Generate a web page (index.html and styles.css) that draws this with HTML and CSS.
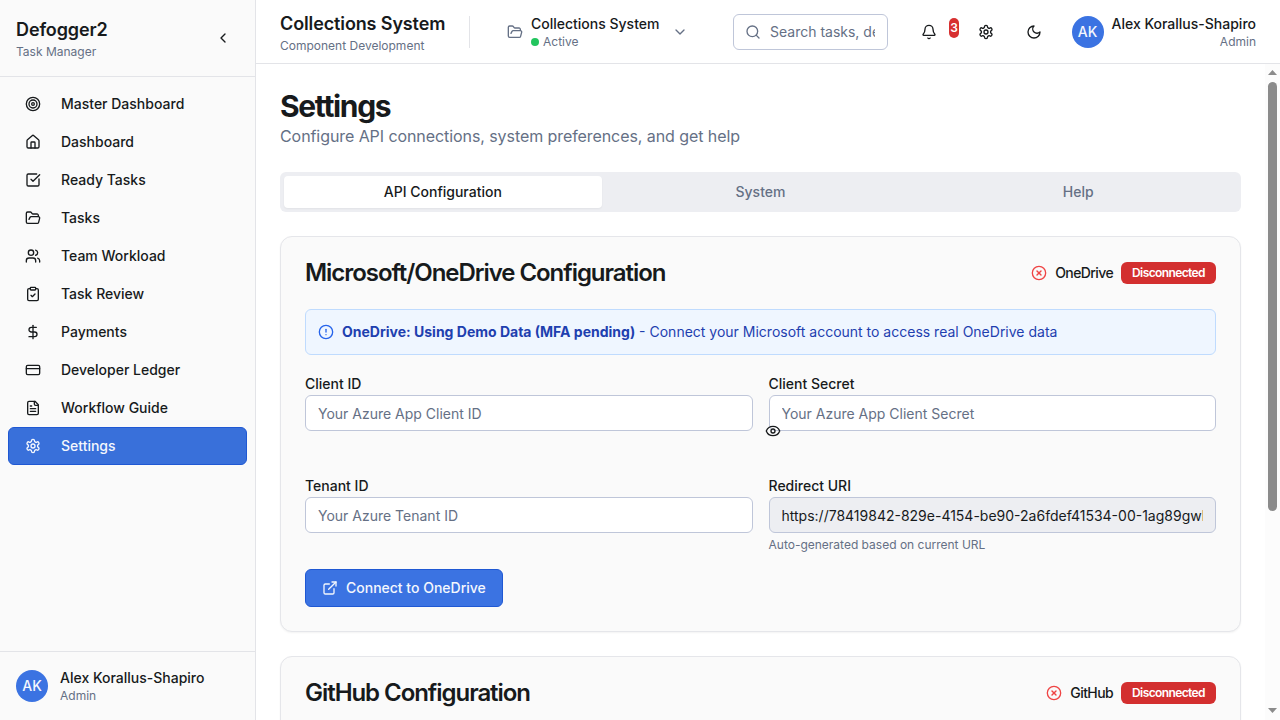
FILE: index.html
```html
<!DOCTYPE html>
<html lang="en">
<head>
<meta charset="utf-8">
<title>Defogger2 - Settings</title>
<link rel="stylesheet" href="styles.css">
</head>
<body>
<svg class="sprite" aria-hidden="true">
  <symbol id="target" viewBox="0 0 24 24"><circle cx="12" cy="12" r="10"/><circle cx="12" cy="12" r="6"/><circle cx="12" cy="12" r="2"/></symbol>
  <symbol id="house" viewBox="0 0 24 24"><path d="M15 21v-8a1 1 0 0 0-1-1h-4a1 1 0 0 0-1 1v8"/><path d="M3 10a2 2 0 0 1 .709-1.528l7-5.999a2 2 0 0 1 2.582 0l7 5.999A2 2 0 0 1 21 10v9a2 2 0 0 1-2 2H5a2 2 0 0 1-2-2z"/></symbol>
  <symbol id="check-square" viewBox="0 0 24 24"><path d="M21 10.5V19a2 2 0 0 1-2 2H5a2 2 0 0 1-2-2V5a2 2 0 0 1 2-2h12.5"/><path d="m9 11 3 3L22 4"/></symbol>
  <symbol id="folder" viewBox="0 0 24 24"><path d="m6 14 1.5-2.9A2 2 0 0 1 9.24 10H20a2 2 0 0 1 1.94 2.5l-1.54 6a2 2 0 0 1-1.95 1.5H4a2 2 0 0 1-2-2V5a2 2 0 0 1 2-2h3.9a2 2 0 0 1 1.69.9l.81 1.2a2 2 0 0 0 1.67.9H18a2 2 0 0 1 2 2v2"/></symbol>
  <symbol id="users" viewBox="0 0 24 24"><path d="M16 21v-2a4 4 0 0 0-4-4H6a4 4 0 0 0-4 4v2"/><circle cx="9" cy="7" r="4"/><path d="M22 21v-2a4 4 0 0 0-3-3.87"/><path d="M16 3.13a4 4 0 0 1 0 7.75"/></symbol>
  <symbol id="clipboard" viewBox="0 0 24 24"><rect width="8" height="4" x="8" y="2" rx="1"/><path d="M16 4h2a2 2 0 0 1 2 2v14a2 2 0 0 1-2 2H6a2 2 0 0 1-2-2V6a2 2 0 0 1 2-2h2"/><path d="m9 14 2 2 4-4"/></symbol>
  <symbol id="dollar" viewBox="0 0 24 24"><path d="M12 2v20"/><path d="M17 5H9.5a3.5 3.5 0 0 0 0 7h5a3.5 3.5 0 0 1 0 7H6"/></symbol>
  <symbol id="card" viewBox="0 0 24 24"><rect width="20" height="14" x="2" y="5" rx="2"/><path d="M2 10h20"/></symbol>
  <symbol id="file" viewBox="0 0 24 24"><path d="M15 2H6a2 2 0 0 0-2 2v16a2 2 0 0 0 2 2h12a2 2 0 0 0 2-2V7Z"/><path d="M14 2v4a2 2 0 0 0 2 2h4"/><path d="M10 9H8"/><path d="M16 13H8"/><path d="M16 17H8"/></symbol>
  <symbol id="gear" viewBox="0 0 24 24"><path d="M12.22 2h-.44a2 2 0 0 0-2 2v.18a2 2 0 0 1-1 1.73l-.43.25a2 2 0 0 1-2 0l-.15-.08a2 2 0 0 0-2.73.73l-.22.38a2 2 0 0 0 .73 2.73l.15.1a2 2 0 0 1 1 1.72v.51a2 2 0 0 1-1 1.74l-.15.09a2 2 0 0 0-.73 2.73l.22.38a2 2 0 0 0 2.73.73l.15-.08a2 2 0 0 1 2 0l.43.25a2 2 0 0 1 1 1.73V20a2 2 0 0 0 2 2h.44a2 2 0 0 0 2-2v-.18a2 2 0 0 1 1-1.73l.43-.25a2 2 0 0 1 2 0l.15.08a2 2 0 0 0 2.73-.73l.22-.39a2 2 0 0 0-.73-2.73l-.15-.08a2 2 0 0 1-1-1.74v-.5a2 2 0 0 1 1-1.74l.15-.09a2 2 0 0 0 .73-2.73l-.22-.38a2 2 0 0 0-2.73-.73l-.15.08a2 2 0 0 1-2 0l-.43-.25a2 2 0 0 1-1-1.73V4a2 2 0 0 0-2-2z"/><circle cx="12" cy="12" r="3"/></symbol>
  <symbol id="chev-left" viewBox="0 0 24 24"><path d="m15 18-6-6 6-6"/></symbol>
  <symbol id="chev-down" viewBox="0 0 24 24"><path d="m6 9 6 6 6-6"/></symbol>
  <symbol id="search" viewBox="0 0 24 24"><circle cx="11" cy="11" r="8"/><path d="m21 21-4.3-4.3"/></symbol>
  <symbol id="bell" viewBox="0 0 24 24"><path d="M10.268 21a2 2 0 0 0 3.464 0"/><path d="M3.262 15.326A1 1 0 0 0 4 17h16a1 1 0 0 0 .74-1.673C19.41 13.956 18 12.499 18 8A6 6 0 0 0 6 8c0 4.499-1.411 5.956-2.738 7.326"/></symbol>
  <symbol id="moon" viewBox="0 0 24 24"><path d="M12 3a6 6 0 0 0 9 9 9 9 0 1 1-9-9Z"/></symbol>
  <symbol id="circle-x" viewBox="0 0 24 24"><circle cx="12" cy="12" r="10"/><path d="m15 9-6 6"/><path d="m9 9 6 6"/></symbol>
  <symbol id="alert" viewBox="0 0 24 24"><circle cx="12" cy="12" r="10"/><path d="M12 8v4"/><path d="M12 16h.01"/></symbol>
  <symbol id="eye" viewBox="0 0 24 24"><path d="M2.062 12.348a1 1 0 0 1 0-.696 10.75 10.75 0 0 1 19.876 0 1 1 0 0 1 0 .696 10.75 10.75 0 0 1-19.876 0"/><circle cx="12" cy="12" r="3"/></symbol>
  <symbol id="external" viewBox="0 0 24 24"><path d="M15 3h6v6"/><path d="M10 14 21 3"/><path d="M18 13v6a2 2 0 0 1-2 2H5a2 2 0 0 1-2-2V8a2 2 0 0 1 2-2h6"/></symbol>
</svg>

<div class="app">
  <aside class="sidebar">
    <div class="brand">
      <div>
        <div class="title">Defogger2</div>
        <div class="caption">Task Manager</div>
      </div>
      <button class="icon-button"><svg class="icon"><use href="#chev-left"/></svg></button>
    </div>
    <nav class="nav">
      <a class="nav-item"><svg class="icon"><use href="#target"/></svg>Master Dashboard</a>
      <a class="nav-item"><svg class="icon"><use href="#house"/></svg>Dashboard</a>
      <a class="nav-item"><svg class="icon"><use href="#check-square"/></svg>Ready Tasks</a>
      <a class="nav-item"><svg class="icon"><use href="#folder"/></svg>Tasks</a>
      <a class="nav-item"><svg class="icon"><use href="#users"/></svg>Team Workload</a>
      <a class="nav-item"><svg class="icon"><use href="#clipboard"/></svg>Task Review</a>
      <a class="nav-item"><svg class="icon"><use href="#dollar"/></svg>Payments</a>
      <a class="nav-item"><svg class="icon"><use href="#card"/></svg>Developer Ledger</a>
      <a class="nav-item"><svg class="icon"><use href="#file"/></svg>Workflow Guide</a>
      <a class="nav-item active"><svg class="icon"><use href="#gear"/></svg>Settings</a>
    </nav>
    <div class="account">
      <div class="avatar">AK</div>
      <div>
        <div class="name">Alex Korallus-Shapiro</div>
        <div class="caption">Admin</div>
      </div>
    </div>
  </aside>

  <div class="workspace">
    <header class="topbar">
      <div class="page-id">
        <div class="title">Collections System</div>
        <div class="caption">Component Development</div>
      </div>
      <div class="divider"></div>
      <div class="project">
        <svg class="icon"><use href="#folder"/></svg>
        <div class="project-text">
          <div class="name">Collections System</div>
          <div class="caption status-line"><span class="dot"></span>Active</div>
        </div>
        <svg class="icon"><use href="#chev-down"/></svg>
      </div>
      <div class="search">
        <svg class="icon"><use href="#search"/></svg>
        <input class="search-input" placeholder="Search tasks, developers...">
      </div>
      <div class="actions">
        <button class="icon-button"><svg class="icon"><use href="#bell"/></svg></button>
        <span class="count">3</span>
        <button class="icon-button gear-button"><svg class="icon"><use href="#gear"/></svg></button>
        <button class="icon-button moon-button"><svg class="icon"><use href="#moon"/></svg></button>
      </div>
      <div class="profile">
        <div class="avatar">AK</div>
        <div class="profile-text">
          <div class="name">Alex Korallus-Shapiro</div>
          <div class="caption">Admin</div>
        </div>
      </div>
    </header>

    <div class="scroll-row">
      <main class="content">
        <div class="page-head">
          <h1 class="heading">Settings</h1>
          <p class="subheading">Configure API connections, system preferences, and get help</p>
        </div>
        <div class="tabs">
          <button class="tab selected">API Configuration</button>
          <button class="tab">System</button>
          <button class="tab">Help</button>
        </div>

        <section class="card">
          <div class="card-head">
            <h2 class="card-title">Microsoft/OneDrive Configuration</h2>
            <div class="connection"><svg class="icon"><use href="#circle-x"/></svg><span>OneDrive</span><span class="badge">Disconnected</span></div>
          </div>
          <div class="notice">
            <svg class="icon"><use href="#alert"/></svg>
            <div><strong class="strong">OneDrive: Using Demo Data (MFA pending)</strong> - Connect your Microsoft account to access real OneDrive data</div>
          </div>
          <div class="form">
            <div class="field">
              <label class="label">Client ID</label>
              <input class="input" placeholder="Your Azure App Client ID">
            </div>
            <div class="field secret">
              <label class="label">Client Secret</label>
              <div class="input-wrap">
                <input class="input" type="password" placeholder="Your Azure App Client Secret">
                <svg class="icon eye"><use href="#eye"/></svg>
              </div>
            </div>
            <div class="field">
              <label class="label">Tenant ID</label>
              <input class="input" placeholder="Your Azure Tenant ID">
            </div>
            <div class="field">
              <label class="label">Redirect URI</label>
              <input class="input readonly" readonly value="https://78419842-829e-4154-be90-2a6fdef41534-00-1ag89gwl">
              <p class="hint">Auto-generated based on current URL</p>
            </div>
          </div>
          <button class="primary"><svg class="icon"><use href="#external"/></svg>Connect to OneDrive</button>
        </section>

        <section class="card">
          <div class="card-head">
            <h2 class="card-title">GitHub Configuration</h2>
            <div class="connection"><svg class="icon"><use href="#circle-x"/></svg><span>GitHub</span><span class="badge">Disconnected</span></div>
          </div>
        </section>
      </main>
      <div class="scrollbar">
        <svg class="arrow" viewBox="0 0 9 5"><path d="M0 5 4.5 0 9 5z"/></svg>
        <div class="thumb"></div>
        <svg class="arrow arrow-down" viewBox="0 0 9 5"><path d="M0 0h9L4.5 5z"/></svg>
      </div>
    </div>
  </div>
</div>
</body>
</html>
```

FILE: styles.css
```css
* { box-sizing: border-box; }
body, h1, h2, p { margin: 0; }
body {
  height: 720px;
  overflow: hidden;
  font: 14px/20px Inter, "Liberation Sans", sans-serif;
  color: #171a1c;
  background: #fff;
}
button, input { font: inherit; color: inherit; }
button { border: 0; background: none; padding: 0; }
.sprite { display: none; }
.icon {
  width: 16px;
  height: 16px;
  flex: none;
  display: block;
  fill: none;
  stroke: currentColor;
  stroke-width: 2;
  stroke-linecap: round;
  stroke-linejoin: round;
}
.app { display: flex; height: 720px; }

.sidebar {
  width: 256px;
  flex: none;
  display: flex;
  flex-direction: column;
  background: #fafafa;
  border-right: 1px solid #e3e4e8;
}
.brand {
  display: flex;
  align-items: center;
  justify-content: space-between;
  padding: 16px;
  border-bottom: 1px solid #e3e4e8;
}
.title { font-size: 18px; line-height: 28px; font-weight: 600; letter-spacing: -0.12px; }
.caption { font-size: 12px; line-height: 16px; color: #657085; }
.name { font-weight: 500; white-space: nowrap; }
.icon-button { width: 32px; height: 32px; display: grid; place-items: center; flex: none; }
.nav { flex: 1; padding: 8px; }
.nav-item {
  display: flex;
  align-items: center;
  gap: 20px;
  height: 38px;
  padding: 0 16px;
  border: 1px solid transparent;
  border-radius: 6px;
  font-weight: 500;
}
.nav-item.active { background: #3970da; border-color: #1f58d3; color: #f4f7fd; }
.account {
  display: flex;
  align-items: center;
  gap: 12px;
  padding: 16px;
  border-top: 1px solid #e3e4e8;
}
.avatar {
  width: 32px;
  height: 32px;
  flex: none;
  display: grid;
  place-items: center;
  border-radius: 50%;
  background: #3b73e2;
  color: #f4f7fd;
  font-weight: 500;
}

.workspace { flex: 1; min-width: 0; display: flex; flex-direction: column; }
.topbar {
  height: 64px;
  flex: none;
  display: flex;
  align-items: center;
  padding: 0 24px;
  border-bottom: 1px solid #e3e4e8;
}
.page-id { width: 189px; flex: none; white-space: nowrap; }
.divider { width: 1px; height: 32px; flex: none; background: #e3e4e8; }
.project {
  width: 181px;
  flex: none;
  margin-left: 37px;
  display: flex;
  align-items: center;
  color: #657085;
}
.project-text { flex: 1; margin-left: 8px; }
.project .name { color: #171a1c; }
.status-line { display: flex; align-items: center; gap: 4px; }
.dot { width: 8px; height: 8px; border-radius: 50%; background: #22c55e; }
.search {
  width: 155px;
  height: 36px;
  flex: none;
  margin-left: 45px;
  display: flex;
  align-items: center;
  gap: 9px;
  padding: 0 12px 0 11px;
  border: 1px solid #bfc6d9;
  border-radius: 6px;
  color: #657085;
}
.search-input { flex: 1; min-width: 0; border: 0; padding: 0; outline: 0; background: none; }
.search-input::placeholder, .input::placeholder { color: #657085; opacity: 1; }
.actions { flex: 1; display: flex; align-items: center; padding-left: 25px; }
.count {
  width: 10px;
  height: 20px;
  margin: 0 0 7px 4px;
  display: grid;
  place-items: center;
  border-radius: 5px;
  background: #d73030;
  color: #fff;
  font-size: 12px;
  font-weight: 600;
}
.gear-button { margin-left: 11px; }
.moon-button { margin-left: 16px; }
.profile { display: flex; align-items: center; gap: 8px; flex: none; }
.profile-text { text-align: right; }

.scroll-row { flex: 1; min-height: 0; display: flex; }
.content {
  flex: 1;
  min-width: 0;
  overflow: hidden;
  display: flex;
  flex-direction: column;
  gap: 24px;
  padding: 24px 24px 0;
}
.heading { font-size: 30px; line-height: 36px; font-weight: 700; letter-spacing: -1.35px; }
.subheading { font-size: 16px; line-height: 24px; color: #657085; letter-spacing: -0.075px; }
.tabs {
  height: 40px;
  flex: none;
  display: grid;
  grid-template-columns: repeat(3, 1fr);
  padding: 4px;
  border-radius: 6px;
  background: #edeef2;
}
.tab { border-radius: 4px; font-weight: 500; color: #657085; }
.tab.selected { background: #fff; color: #171a1c; box-shadow: 0 1px 2px rgba(0, 0, 0, .05); }
.card {
  flex: none;
  padding: 24px;
  border: 1px solid #e5e6ea;
  border-radius: 12px;
  background: #fafafa;
  box-shadow: 0 1px 2px rgba(0, 0, 0, .05);
}
.card-head {
  height: 24px;
  display: flex;
  align-items: center;
  justify-content: space-between;
  letter-spacing: -0.6px;
  margin-bottom: 24px;
}
.card-title { font-size: 24px; line-height: 24px; font-weight: 600; letter-spacing: -1.05px; }
.connection { display: flex; align-items: center; gap: 8px; font-weight: 500; }
.connection .icon { color: #ef4444; }
.badge {
  padding: 2px 10px;
  border: 1px solid transparent;
  border-radius: 6px;
  background: #d32f2f;
  color: #fff;
  font-size: 12px;
  line-height: 16px;
  font-weight: 600;
}
.notice {
  display: flex;
  align-items: center;
  gap: 8px;
  padding: 12px;
  border: 1px solid #bfdbfe;
  border-radius: 6px;
  background: #eff6ff;
  color: #1e40af;
}
.notice .icon { color: #2563eb; }
.strong { font-weight: 700; }
.form {
  display: grid;
  grid-template-columns: 1fr 1fr;
  gap: 16px;
  margin: 16px 0;
}
.secret { padding-bottom: 26px; }
.label { display: block; padding: 3px 0 1px; font-weight: 500; }
.input {
  display: block;
  width: 100%;
  height: 36px;
  padding: 0 12px;
  border: 1px solid #bfc6d9;
  border-radius: 6px;
  outline: 0;
  background: #fff;
}
.input.readonly { background: #edeef2; }
.input-wrap { position: relative; }
.eye { position: absolute; left: -4px; top: 28px; }
.hint { margin-top: 4px; font-size: 12px; line-height: 16px; color: #657085; }
.primary {
  display: flex;
  align-items: center;
  gap: 8px;
  height: 38px;
  padding: 0 16px;
  border: 1px solid #1f58d3;
  border-radius: 6px;
  background: #3b73e2;
  color: #f4f7fd;
  font-weight: 500;
}
.scrollbar {
  width: 15px;
  flex: none;
  display: flex;
  flex-direction: column;
  align-items: center;
  padding: 6px 0 7px;
  background: #fcfcfc;
}
.arrow { width: 9px; height: 5px; fill: #8b8b8b; }
.thumb { width: 9px; height: 429px; margin-top: 7px; border-radius: 5px; background: #8b8b8b; }
.arrow-down { margin-top: auto; }
```
